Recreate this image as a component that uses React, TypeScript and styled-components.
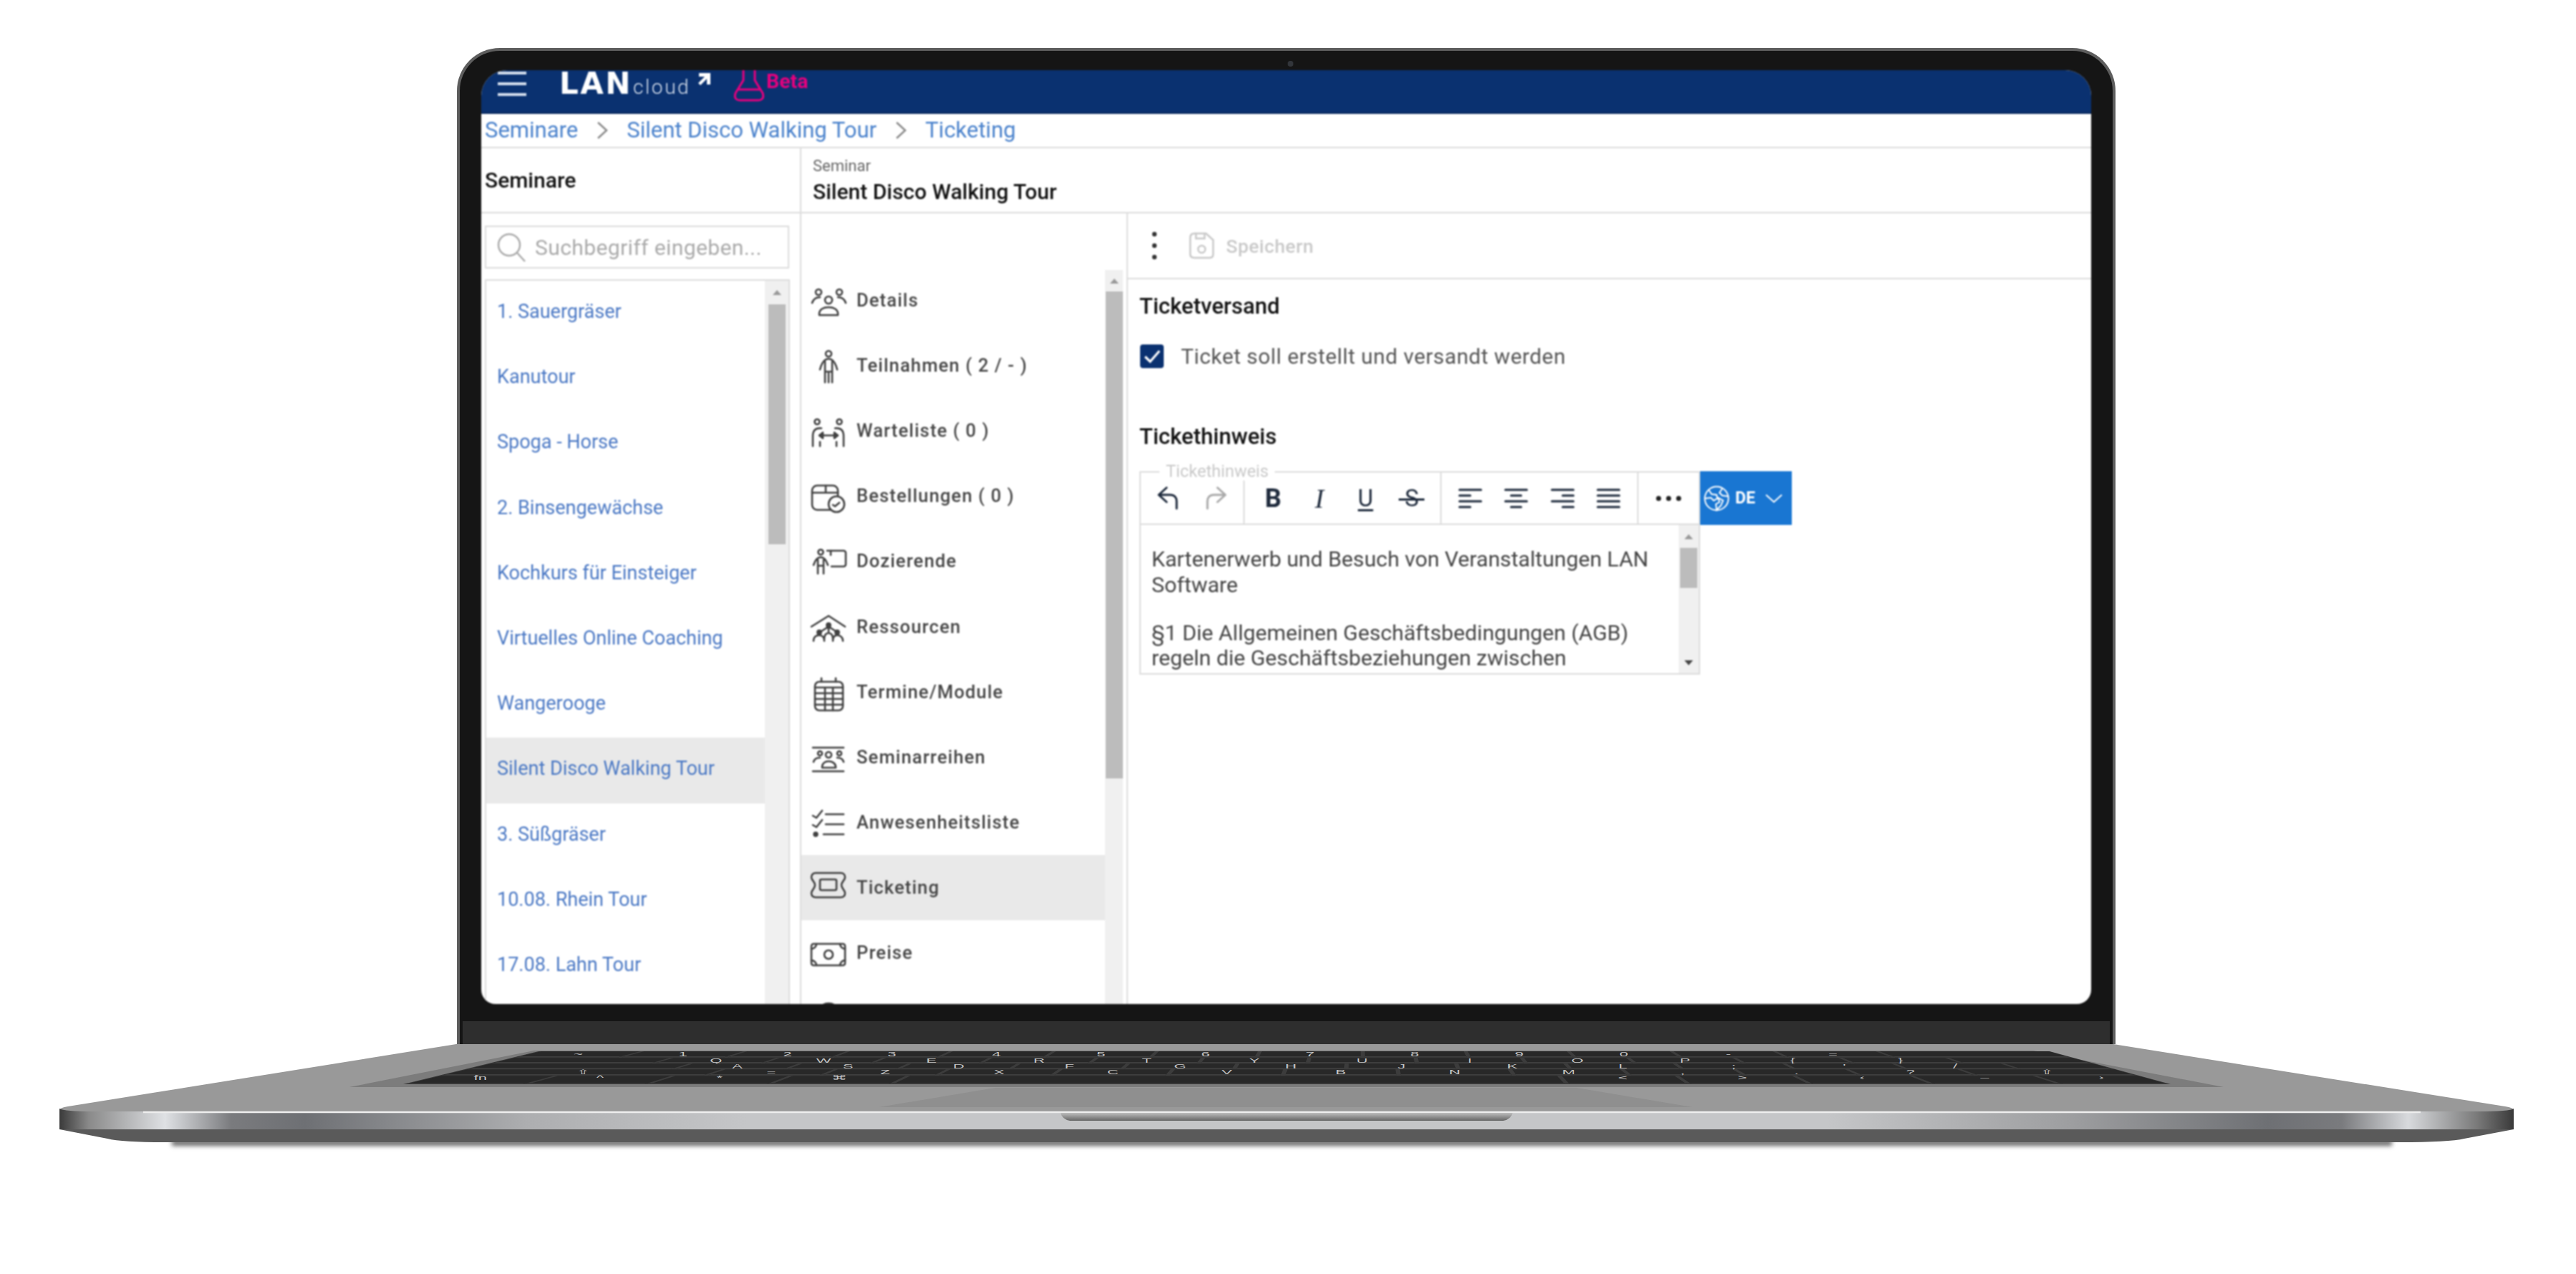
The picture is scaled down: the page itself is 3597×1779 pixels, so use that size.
import React from "react";
import styled, { createGlobalStyle } from "styled-components";

const Global = createGlobalStyle`
  html, body { margin: 0; padding: 0; background: #fff; }
  * { box-sizing: border-box; }
  body { font-family: Roboto, "Liberation Sans", sans-serif; }
`;

const Stage = styled.div`
  width: 3597px;
  height: 1779px;
  padding-top: 67px;
  overflow: hidden;
  background: #fff;
  display: flex;
  flex-direction: column;
`;
const Lid = styled.div`
  position: relative;
  width: 2316px;
  height: 1391px;
  margin-left: 638px;
  padding: 27px 30px 0;
  background: #151515;
  border: 4px solid #5e5e5e;
  border-bottom: none;
  border-radius: 60px 60px 0 0;
`;
const Camera = styled.div`
  position: absolute;
  left: 1156px;
  top: 14px;
  width: 8px;
  height: 8px;
  border-radius: 50%;
  background: #33363b;
`;
const Screen = styled.div`
  width: 2248px;
  height: 1304px;
  background: #fff;
  border-radius: 36px 36px 20px 20px;
  overflow: hidden;
  display: flex;
  flex-direction: column;
  filter: blur(0.8px);
`;
const Chin = styled.div`
  height: 32px;
  margin: 24px -26px 0;
  background: #2e2e2e;
`;
const TopBar = styled.header`
  height: 61px;
  flex: none;
  background: #0a3170;
  border-bottom: 2px solid #08285c;
  display: flex;
  align-items: flex-start;
  padding: 1px 0 0 23px;
`;
const Burger = styled.svg`
  width: 40px;
  height: 36px;
  flex: none;
`;
const Logo = styled.div`
  margin: -2px 0 0 46px;
  width: 218px;
  display: flex;
  align-items: baseline;
  color: #fff;
  height: 40px;
`;
const LogoMain = styled.span`
  font: 700 42px/40px "DejaVu Sans", sans-serif;
  letter-spacing: 2.5px;
`;
const LogoSub = styled.span`
  font: 300 28px/40px Roboto, sans-serif;
  letter-spacing: 2.6px;
  margin-left: 1px;
  color: #d9e2ef;
`;
const LogoArrow = styled.svg`
  width: 20px;
  height: 20px;
  margin-left: 10px;
  align-self: flex-start;
  margin-top: 3px;
  flex: none;
`;
const Flask = styled.svg`
  width: 46px;
  height: 44px;
  margin: -1px 0 0 24px;
  flex: none;
`;
const BetaTag = styled.span`
  font: 700 28.5px/28px Roboto, sans-serif;
  color: #e6007e;
  margin: 1px 0 0 1px;
`;
const Crumbs = styled.nav`
  height: 48px;
  flex: none;
  border-bottom: 2px solid #dcdcdc;
  display: flex;
  align-items: center;
  padding-left: 5px;
  padding-bottom: 1px;
`;
const Crumb = styled.span`
  font-size: 31px;
  color: #4a82cc;
  white-space: nowrap;
`;
const CrumbChevron = styled.svg`
  width: 16px;
  height: 24px;
  margin: 0 26px;
  flex: none;
`;
const Workspace = styled.div`
  flex: 1;
  min-height: 0;
  display: flex;
`;
const LeftColumn = styled.aside`
  width: 447px;
  flex: none;
  border-right: 2px solid #dcdcdc;
  display: flex;
  flex-direction: column;
`;
const PaneTitle = styled.div`
  height: 91px;
  flex: none;
  border-bottom: 2px solid #dcdcdc;
  display: flex;
  align-items: center;
  padding-left: 5px;
  font-size: 30px;
  font-weight: 500;
  color: #111;
`;
const SearchBox = styled.div`
  height: 60px;
  width: 425px;
  flex: none;
  margin: 17px 0 0 5px;
  border: 2px solid #dcdcdc;
  display: flex;
  align-items: center;
  padding-left: 14px;
  gap: 12px;
`;
const SearchText = styled.span`
  font-size: 30px;
  color: #aaa;
  letter-spacing: 0.4px;
  white-space: nowrap;
`;
const SeminarList = styled.div`
  width: 426px;
  flex: 1;
  min-height: 0;
  margin: 15px 0 0 5px;
  border: 2px solid #dcdcdc;
  border-bottom: none;
  display: flex;
`;
const SeminarItems = styled.div`
  flex: 1;
  min-width: 0;
`;
const SeminarRow = styled.div<{ $active?: boolean }>`
  height: 91.2px;
  display: flex;
  align-items: center;
  padding: 0 0 5px 15px;
  font-size: 27px;
  color: #4a78c4;
  white-space: nowrap;
  background: ${(p) => (p.$active ? "#e9e9e9" : "transparent")};
`;
const Track = styled.div<{ $w: number }>`
  width: ${(p) => p.$w}px;
  flex: none;
  background: #f0f0f0;
  display: flex;
  flex-direction: column;
  align-items: center;
`;
const ArrowCap = styled.div<{ $h: number; $down?: boolean }>`
  height: ${(p) => p.$h}px;
  flex: none;
  width: 100%;
  display: flex;
  align-items: center;
  justify-content: center;
  &::before {
    content: "";
    border-left: 6px solid transparent;
    border-right: 6px solid transparent;
    ${(p) => (p.$down ? "border-top: 7px solid #444;" : "border-bottom: 7px solid #999;")}
  }
`;
const Thumb = styled.div<{ $h: number; $w: number }>`
  height: ${(p) => p.$h}px;
  width: ${(p) => p.$w}px;
  flex: none;
  background: #bcbcbc;
`;
const Spacer = styled.div`
  flex: 1;
`;
const MainColumn = styled.main`
  flex: 1;
  min-width: 0;
  display: flex;
  flex-direction: column;
`;
const RecordHead = styled.div`
  height: 91px;
  flex: none;
  border-bottom: 2px solid #dcdcdc;
  padding: 12px 0 0 16px;
  display: flex;
  flex-direction: column;
`;
const RecordKind = styled.span`
  font-size: 22px;
  line-height: 26px;
  color: #666;
`;
const RecordName = styled.span`
  font-size: 30px;
  line-height: 36px;
  font-weight: 500;
  margin-top: 5px;
  color: #111;
`;
const RecordBody = styled.div`
  flex: 1;
  min-height: 0;
  display: flex;
`;
const NavPane = styled.div`
  width: 456px;
  flex: none;
  border-right: 2px solid #dcdcdc;
  display: flex;
  padding-right: 5px;
`;
const NavList = styled.div`
  flex: 1;
  min-width: 0;
  padding-top: 76px;
`;
const NavRow = styled.div<{ $active?: boolean }>`
  height: 91.1px;
  display: flex;
  align-items: center;
  padding: 0 0 1px 6px;
  gap: 1px;
  background: ${(p) => (p.$active ? "#e9e9e9" : "transparent")};
`;
const NavIcon = styled.svg`
  width: 70px;
  height: 60px;
  flex: none;
  fill: none;
  stroke: #3f3f3f;
  stroke-width: 2.6;
  stroke-linecap: round;
  stroke-linejoin: round;
`;
const NavLabel = styled.span`
  font-size: 25.5px;
  font-weight: 500;
  letter-spacing: 1.15px;
  color: #444;
  white-space: nowrap;
`;
const NavScroll = styled.div`
  margin-top: 79px;
  display: flex;
`;
const ContentPane = styled.section`
  flex: 1;
  min-width: 0;
  display: flex;
  flex-direction: column;
`;
const ActionBar = styled.div`
  height: 92px;
  flex: none;
  border-bottom: 2px solid #dcdcdc;
  display: flex;
  align-items: center;
  padding-left: 31px;
`;
const KebabIcon = styled.svg`
  width: 12px;
  height: 44px;
  flex: none;
`;
const SaveIcon = styled.svg`
  width: 36px;
  height: 38px;
  margin-left: 42px;
  flex: none;
  fill: none;
  stroke: #c8c8c8;
  stroke-width: 2.5;
`;
const SaveLabel = styled.span`
  font-size: 26.5px;
  font-weight: 500;
  color: #c9c9c9;
  margin-left: 16px;
  letter-spacing: 0.4px;
`;
const FormBody = styled.div`
  padding: 23px 0 0 16px;
  display: flex;
  flex-direction: column;
  align-items: flex-start;
`;
const SectionHeading = styled.h2<{ $gap?: number }>`
  margin: ${(p) => p.$gap ?? 0}px 0 0;
  font-size: 31px;
  line-height: 30px;
  font-weight: 500;
  color: #111;
`;
const CheckRow = styled.div`
  display: flex;
  align-items: center;
  gap: 24px;
  margin: 38px 0 0 1px;
`;
const CheckBox = styled.div`
  width: 33px;
  height: 33px;
  border-radius: 4px;
  background: #0a3170;
  display: flex;
  align-items: center;
  justify-content: center;
`;
const CheckLabel = styled.span`
  font-size: 29.8px;
  line-height: 33px;
  color: #555;
  letter-spacing: 0.5px;
`;
const Editor = styled.div`
  position: relative;
  width: 911px;
  margin-top: 33px;
`;
const EditorLegend = styled.span`
  position: absolute;
  left: 28px;
  top: -13px;
  background: #fff;
  padding: 0 9px;
  font-size: 23.5px;
  line-height: 26px;
  color: #c9c9c9;
`;
const EditorToolbar = styled.div`
  display: flex;
  height: 75px;
`;
const ToolFrame = styled.div`
  width: 783px;
  border: 2px solid #dcdcdc;
  display: flex;
`;
const ToolGroup = styled.div<{ $w: number; $last?: boolean }>`
  width: ${(p) => p.$w}px;
  flex: none;
  display: flex;
  justify-content: center;
  align-items: center;
  border-right: ${(p) => (p.$last ? "none" : "2px solid #dcdcdc")};
`;
const ToolButton = styled.div<{ $muted?: boolean }>`
  width: 64.5px;
  height: 100%;
  display: flex;
  align-items: center;
  justify-content: center;
  flex: none;
  color: ${(p) => (p.$muted ? "#aaa" : "#1e2a3c")};
`;
const ToolLetter = styled.span<{ $kind: "b" | "i" | "u" | "s" }>`
  position: relative;
  color: #1e2a3c;
  line-height: 1;
  font-family: ${(p) => (p.$kind === "i" ? '"Liberation Serif", serif' : "Roboto, sans-serif")};
  font-style: ${(p) => (p.$kind === "i" ? "italic" : "normal")};
  font-weight: ${(p) => (p.$kind === "b" ? 700 : 400)};
  font-size: ${(p) => (p.$kind === "b" ? 36 : p.$kind === "i" ? 38 : 33)}px;
  text-decoration: ${(p) => (p.$kind === "u" ? "underline" : "none")};
  text-decoration-thickness: 3px;
  text-underline-offset: 4px;
  ${(p) =>
    p.$kind === "s"
      ? `&::after {
          content: "";
          position: absolute;
          left: -8px;
          right: -8px;
          top: 17px;
          height: 3px;
          background: #1e2a3c;
        }`
      : ""}
`;
const ToolIcon = styled.svg`
  width: 40px;
  height: 40px;
  fill: none;
  stroke: currentColor;
  stroke-width: 3;
  stroke-linecap: round;
  stroke-linejoin: round;
`;
const LangButton = styled.div`
  width: 128px;
  background: #1976d2;
  color: #fff;
  display: flex;
  align-items: center;
  padding-left: 4px;
  gap: 7px;
`;
const LangCode = styled.span`
  font-size: 23px;
  font-weight: 700;
`;
const LangIcon = styled.svg`
  width: 38px;
  height: 38px;
  fill: none;
  stroke: #fff;
  stroke-width: 2;
  flex: none;
`;
const LangChevron = styled.svg`
  width: 26px;
  height: 14px;
  margin-left: 6px;
  fill: none;
  stroke: #fff;
  stroke-width: 2;
  flex: none;
`;
const EditorBody = styled.div`
  width: 783px;
  height: 209px;
  border: 2px solid #dcdcdc;
  border-top: none;
  display: flex;
  overflow: hidden;
`;
const EditorText = styled.div`
  width: 751px;
  flex: none;
  padding: 30px 0 0 15px;
  font-size: 30.2px;
  line-height: 35.5px;
  color: #444;
  overflow: hidden;
`;
const EditorPara = styled.p`
  margin: 0 0 31.5px;
`;
const LaptopBase = styled.svg`
  display: block;
  width: 3597px;
  height: 160px;
  flex: none;
`;
const DropShadow = styled.rect`
  filter: blur(3px);
`;
const KeyLegend = styled.text`
  font-family: "Liberation Sans", sans-serif;
  font-size: 10px;
  fill: #c4c4c4;
  text-anchor: middle;
`;

const crumbs = ["Seminare", "Silent Disco Walking Tour", "Ticketing"];
const seminars = [
  "1. Sauergräser",
  "Kanutour",
  "Spoga - Horse",
  "2. Binsengewächse",
  "Kochkurs für Einsteiger",
  "Virtuelles Online Coaching",
  "Wangerooge",
  "Silent Disco Walking Tour",
  "3. Süßgräser",
  "10.08. Rhein Tour",
  "17.08. Lahn Tour",
];

const navItems: { label: string; icon: React.ReactNode }[] = [
  {
    label: "Details",
    icon: (
      <>
        <circle cx="18" cy="19" r="4" />
        <circle cx="47" cy="19" r="4" />
        <circle cx="32" cy="30" r="5" />
        <path d="M9 34c2-6 6-8 11-8M56 34c-2-6-6-8-11-8" />
        <path d="M19 51v-2c0-6 6-9 13-9s13 3 13 9v2z" />
      </>
    ),
  },
  {
    label: "Teilnahmen ( 2 / - )",
    icon: (
      <>
        <circle cx="32" cy="14" r="4" />
        <path d="M32 21c-6 0-10 7-12 15M32 21c6 0 10 7 12 15" />
        <path d="M27 25v29M37 25v29M27 39h10M32 41v13" />
      </>
    ),
  },
  {
    label: "Warteliste ( 0 )",
    icon: (
      <>
        <circle cx="16" cy="18" r="3.5" />
        <circle cx="47" cy="18" r="3.5" />
        <path d="M22 27c-9-1-12 4-12 11v14M20 46v6M41 27c9-1 12 4 12 11v14M43 46v6" />
        <path d="M21 37h22" />
        <path d="M19 37l5-4v8zM45 37l-5-4v8z" fill="#444" />
      </>
    ),
  },
  {
    label: "Bestellungen ( 0 )",
    icon: (
      <>
        <path d="M35 50H16a7 7 0 0 1-7-7V23a7 7 0 0 1 7-7h22a7 7 0 0 1 7 7v7" />
        <path d="M9 26h36M28 16v10" />
        <circle cx="43" cy="42" r="11" fill="#fff" />
        <path d="M38 43l3 2 6-5" />
      </>
    ),
  },
  {
    label: "Dozierende",
    icon: (
      <>
        <circle cx="21" cy="18" r="3.5" />
        <path d="M21 25c-5 0-8 5-10 11M21 25c5 0 8 5 10 11M17 28v20M25 28v20M17 37h8" />
        <path d="M30 16h23a3 3 0 0 1 3 3v16a3 3 0 0 1-3 3H36" />
        <path d="M35 16v6" />
      </>
    ),
  },
  {
    label: "Ressourcen",
    icon: (
      <>
        <path d="M8 30l24-15 23 15" />
        <circle cx="32" cy="28" r="2.6" fill="#444" />
        <circle cx="19" cy="38" r="2.6" fill="#444" />
        <circle cx="44" cy="38" r="2.6" fill="#444" />
        <path d="M32 30l-11 7M32 30l11 7M32 30v8M26 48c0-7 3-9 6-9s6 2 6 9M11 50c0-6 4-8 8-8s7 3 7 8M38 50c0-6 3-8 6-8s8 2 8 8" />
      </>
    ),
  },
  {
    label: "Termine/Module",
    icon: (
      <>
        <rect x="13" y="16" width="39" height="40" rx="6" />
        <path d="M22 11v5M42 11v5M13 24h39M13 32h39M13 40h39M13 48h39M27 24v32M38 24v32" />
      </>
    ),
  },
  {
    label: "Seminarreihen",
    icon: (
      <>
        <path d="M10 17h43M10 50h43" />
        <circle cx="20" cy="25" r="3" />
        <circle cx="47" cy="25" r="3" />
        <circle cx="32" cy="27" r="4" />
        <path d="M11 37c1-4 4-6 9-6M53 37c-1-4-4-6-9-6" />
        <path d="M23 45v-1c0-5 4-8 9-8s10 3 10 8v1z" />
      </>
    ),
  },
  {
    label: "Anwesenheitsliste",
    icon: (
      <>
        <path d="M10 21l5 3 8-10M10 34l5 3 8-10M28 19h25M28 33h25M25 47h28" />
        <circle cx="14" cy="47" r="2.4" fill="#444" />
      </>
    ),
  },
  {
    label: "Ticketing",
    icon: (
      <>
        <path d="M14 10h35c4 0 6 3 6 6 0 4-5 6-5 11s5 7 5 11c0 4-2 6-6 6H14c-4 0-6-2-6-6 0-4 5-6 5-11s-5-7-5-11c0-3 2-6 6-6z" />
        <rect x="20" y="19" width="23" height="15" rx="2" />
      </>
    ),
  },
  {
    label: "Preise",
    icon: (
      <>
        <rect x="8" y="18" width="47" height="30" rx="3" />
        <circle cx="32" cy="33" r="6" />
        <path d="M8 25a7 7 0 0 0 7-7M48 18a7 7 0 0 0 7 7M8 41a7 7 0 0 1 7 7M48 48a7 7 0 0 1 7-7" />
      </>
    ),
  },
];

const AlignLines = ({ rows }: { rows: [number, number][] }) => (
  <ToolIcon viewBox="0 0 40 40">
    {rows.map(([a, b], i) => (
      <line key={i} x1={a} x2={b} y1={8 + i * 8} y2={8 + i * 8} />
    ))}
  </ToolIcon>
);

/* Keyboard geometry: keys are laid on the keyboard deck in perspective. */
type Key = [string, number];
const letters = (s: string): Key[] => s.split(" ").map((c) => [c, 1]);
const keyRows: { top: number; bottom: number; keys: Key[] }[] = [
  { top: 10, bottom: 18.5, keys: [...letters("~ 1 2 3 4 5 6 7 8 9 0 - ="), ["", 1.68]] },
  { top: 19.2, bottom: 26.5, keys: [["", 1.5], ...letters("Q W E R T Y U I O P { }"), ["", 1.2]] },
  { top: 27.2, bottom: 34.5, keys: [["", 1.85], ...letters("A S D F G H J K L ; ' /"), ["", 0.85]] },
  { top: 35.2, bottom: 43.5, keys: [["⇧", 2.3], ...letters("= Z X C V B N M , . ?"), ["⇧", 1.4]] },
  {
    top: 44.2,
    bottom: 56,
    keys: [["fn", 1], ["^", 1], ["*", 1], ["⌘", 1], ["", 5.55], ["<", 1], [">", 1], ["‹", 1], ["–", 1.05], ["›", 0.9]],
  },
];
const xAt = (u: number, y: number) => {
  const t = (y - 10) / 46;
  const left = 752 + (563 - 752) * t;
  const right = 2862 + (3031 - 2862) * t;
  return left + (right - left) * u;
};

const Keyboard = () => (
  <g>
    <polygon points="746,9 2839,9 3105,60 488,60" fill="#7c7c7c" />
    <polygon points="752,10 2862,10 3031,56 563,56" fill="#3c3c3c" />
    {keyRows.map((row, r) => {
      const total = row.keys.reduce((s, k) => s + k[1], 0);
      let acc = 0;
      return row.keys.map(([label, w], k) => {
        const a = (acc + 0.02) / total;
        const b = (acc + w - 0.02) / total;
        acc += w;
        const y0 = row.top;
        const y1 = row.bottom;
        const ym = y1 - 1.5;
        const pts = `${xAt(a, y0) + 1},${y0} ${xAt(b, y0) + 1},${y0} ${xAt(b, y1)},${y1} ${xAt(a, y1)},${y1}`;
        const lip = `${xAt(a, ym)},${ym} ${xAt(b, ym)},${ym} ${xAt(b, y1)},${y1} ${xAt(a, y1)},${y1}`;
        const ctr = (xAt(a, (y0 + y1) / 2) + xAt(b, (y0 + y1) / 2)) / 2;
        const cy = (y0 + y1) / 2 + (r === 4 ? 0 : 3);
        return (
          <g key={`${r}-${k}`}>
            <polygon points={pts} fill="#282828" />
            <polygon points={lip} fill="#3e3e3e" />
            {label && (
              <KeyLegend transform={`translate(${ctr} ${cy}) scale(2.2 0.9)`}>{label}</KeyLegend>
            )}
          </g>
        );
      });
    })}
  </g>
);

const Base = () => (
  <LaptopBase viewBox="0 0 3597 160">
    <defs>
      <linearGradient id="front" x1="83" x2="3510" y1="0" y2="0" gradientUnits="userSpaceOnUse">
        <stop offset="0" stopColor="#3a3a3a" />
        <stop offset="0.012" stopColor="#8a8a8a" />
        <stop offset="0.043" stopColor="#dfe1e4" />
        <stop offset="0.07" stopColor="#7a7b7e" />
        <stop offset="0.1" stopColor="#6e7074" />
        <stop offset="0.19" stopColor="#adaeb0" />
        <stop offset="0.28" stopColor="#c5c6c8" />
        <stop offset="0.72" stopColor="#c5c6c8" />
        <stop offset="0.82" stopColor="#9d9ea0" />
        <stop offset="0.9" stopColor="#6e7074" />
        <stop offset="0.93" stopColor="#7a7b7e" />
        <stop offset="0.957" stopColor="#d8dadd" />
        <stop offset="0.985" stopColor="#7a7a7a" />
        <stop offset="1" stopColor="#3a3a3a" />
      </linearGradient>
      <linearGradient id="notch" x1="0" x2="0" y1="0" y2="1">
        <stop offset="0" stopColor="#bdbdbd" />
        <stop offset="1" stopColor="#666" />
      </linearGradient>
    </defs>
    <DropShadow x="240" y="134" width="3100" height="8" fill="#666" />
    <path d="M637 0H2951L3498 87Q3510 89 3510 92V96H83V92Q83 89 95 87Z" fill="#999" />
    <Keyboard />
    <polygon points="1389,61 2202,61 2363,88 1228,88" fill="#8f8f8f" />
    <path d="M83 90Q90 94 130 94H3460Q3505 94 3510 90V119H83Z" fill="url(#front)" />
    <path d="M200 95H3380" stroke="#eee" strokeWidth="2.5" />
    <path d="M1481 96H2112Q2110 105 2099 107H1494Q1483 105 1481 96Z" fill="url(#notch)" />
    <path d="M83 119L150 132Q170 137 230 137H3350Q3420 137 3441 132L3510 119Z" fill="#5a5a5a" />
  </LaptopBase>
);

const Scroll = ({ w, cap, thumb, thumbW, bottomCap }: { w: number; cap: number; thumb: number; thumbW: number; bottomCap?: number }) => (
  <Track $w={w}>
    <ArrowCap $h={cap} />
    <Thumb $h={thumb} $w={thumbW} />
    <Spacer />
    {bottomCap ? <ArrowCap $h={bottomCap} $down /> : null}
  </Track>
);

export default function App() {
  return (
    <Stage>
      <Global />
      <Lid>
        <Camera />
        <Screen>
          <TopBar>
            <Burger viewBox="0 0 40 36">
              <path d="M0 3H40M0 18H40M0 33H40" stroke="#d5dfee" strokeWidth="4" />
            </Burger>
            <Logo>
              <LogoMain>LAN</LogoMain>
              <LogoSub>cloud</LogoSub>
              <LogoArrow viewBox="0 0 20 20">
                <path d="M2 2H18V18H13V10L4 19L1 16L10 7H2Z" fill="#fff" />
              </LogoArrow>
            </Logo>
            <Flask viewBox="0 0 46 44" fill="none" stroke="#e6007e" strokeWidth="3">
              <path d="M15 0V14L4 32Q1 42 11 42H35Q45 42 42 32L31 14V0" />
              <path d="M8 27H38" />
            </Flask>
            <BetaTag>Beta</BetaTag>
          </TopBar>
          <Crumbs>
            {crumbs.map((c, i) => (
              <React.Fragment key={c}>
                {i > 0 && (
                  <CrumbChevron viewBox="0 0 16 24">
                    <path d="M2 1L14 12L2 23" fill="none" stroke="#8a8a8a" strokeWidth="2.5" />
                  </CrumbChevron>
                )}
                <Crumb>{c}</Crumb>
              </React.Fragment>
            ))}
          </Crumbs>
          <Workspace>
            <LeftColumn>
              <PaneTitle>Seminare</PaneTitle>
              <SearchBox>
                <svg width="42" height="42" viewBox="0 0 42 42" fill="none" stroke="#aaa" strokeWidth="2.5">
                  <circle cx="18" cy="18" r="15" />
                  <path d="M29 29L40 41" />
                </svg>
                <SearchText>Suchbegriff eingeben...</SearchText>
              </SearchBox>
              <SeminarList>
                <SeminarItems>
                  {seminars.map((s) => (
                    <SeminarRow key={s} $active={s === "Silent Disco Walking Tour"}>
                      {s}
                    </SeminarRow>
                  ))}
                </SeminarItems>
                <Scroll w={33} cap={33} thumb={335} thumbW={24} />
              </SeminarList>
            </LeftColumn>
            <MainColumn>
              <RecordHead>
                <RecordKind>Seminar</RecordKind>
                <RecordName>Silent Disco Walking Tour</RecordName>
              </RecordHead>
              <RecordBody>
                <NavPane>
                  <NavList>
                    {navItems.map((n) => (
                      <NavRow key={n.label} $active={n.label === "Ticketing"}>
                        <NavIcon viewBox="0 0 70 60">{n.icon}</NavIcon>
                        <NavLabel>{n.label}</NavLabel>
                      </NavRow>
                    ))}
                    <NavRow>
                      <NavIcon viewBox="0 0 70 60">
                        <circle cx="32" cy="25" r="15" />
                      </NavIcon>
                    </NavRow>
                  </NavList>
                  <NavScroll>
                    <Scroll w={25} cap={30} thumb={680} thumbW={24} />
                  </NavScroll>
                </NavPane>
                <ContentPane>
                  <ActionBar>
                    <KebabIcon viewBox="0 0 12 44">
                      <circle cx="6" cy="6" r="3.2" fill="#333" />
                      <circle cx="6" cy="22" r="3.2" fill="#333" />
                      <circle cx="6" cy="38" r="3.2" fill="#333" />
                    </KebabIcon>
                    <SaveIcon viewBox="0 0 36 38">
                      <path d="M8 2H24L34 11V31Q34 36 29 36H8Q2 36 2 31V8Q2 2 8 2Z" />
                      <circle cx="18" cy="24" r="5" />
                      <path d="M10 2V9H22V2" />
                    </SaveIcon>
                    <SaveLabel>Speichern</SaveLabel>
                  </ActionBar>
                  <FormBody>
                    <SectionHeading>Ticketversand</SectionHeading>
                    <CheckRow>
                      <CheckBox>
                        <svg width="24" height="20" viewBox="0 0 24 20" fill="none" stroke="#fff" strokeWidth="3.2">
                          <path d="M2 10L9 17L22 2" />
                        </svg>
                      </CheckBox>
                      <CheckLabel>Ticket soll erstellt und versandt werden</CheckLabel>
                    </CheckRow>
                    <SectionHeading $gap={81}>Tickethinweis</SectionHeading>
                    <Editor>
                      <EditorLegend>Tickethinweis</EditorLegend>
                      <EditorToolbar>
                        <ToolFrame>
                          <ToolGroup $w={145}>
                            <ToolButton>
                              <ToolIcon viewBox="0 0 40 40">
                                <path d="M17 5L6 15L17 25M6 15H22C28 15 31 19 31 24V34" />
                              </ToolIcon>
                            </ToolButton>
                            <ToolButton $muted>
                              <ToolIcon viewBox="0 0 40 40">
                                <path d="M23 5L34 15L23 25M34 15H18C12 15 9 19 9 24V34" />
                              </ToolIcon>
                            </ToolButton>
                          </ToolGroup>
                          <ToolGroup $w={275}>
                            <ToolButton>
                              <ToolLetter $kind="b">B</ToolLetter>
                            </ToolButton>
                            <ToolButton>
                              <ToolLetter $kind="i">I</ToolLetter>
                            </ToolButton>
                            <ToolButton>
                              <ToolLetter $kind="u">U</ToolLetter>
                            </ToolButton>
                            <ToolButton>
                              <ToolLetter $kind="s">S</ToolLetter>
                            </ToolButton>
                          </ToolGroup>
                          <ToolGroup $w={275}>
                            <ToolButton>
                              <AlignLines rows={[[5, 35], [5, 20], [5, 35], [5, 20]]} />
                            </ToolButton>
                            <ToolButton>
                              <AlignLines rows={[[5, 35], [13, 27], [5, 35], [13, 27]]} />
                            </ToolButton>
                            <ToolButton>
                              <AlignLines rows={[[5, 35], [20, 35], [5, 35], [20, 35]]} />
                            </ToolButton>
                            <ToolButton>
                              <AlignLines rows={[[5, 35], [5, 35], [5, 35], [5, 35]]} />
                            </ToolButton>
                          </ToolGroup>
                          <ToolGroup $w={84} $last>
                            <svg width="36" height="10" viewBox="0 0 36 10" fill="#222">
                              <circle cx="4" cy="5" r="3.5" />
                              <circle cx="18" cy="5" r="3.5" />
                              <circle cx="32" cy="5" r="3.5" />
                            </svg>
                          </ToolGroup>
                        </ToolFrame>
                        <LangButton>
                          <LangIcon viewBox="0 0 38 38">
                            <circle cx="19" cy="19" r="16.5" />
                            <path d="M8 7l4 6 7 1 1 5-5 3-4-4-8 1M27 5l-4 6 4 4 8 1M19 35l-1-8 5-3-2-6 7 4-3 7z" />
                          </LangIcon>
                          <LangCode>DE</LangCode>
                          <LangChevron viewBox="0 0 26 14">
                            <path d="M2 2L13 12L24 2" />
                          </LangChevron>
                        </LangButton>
                      </EditorToolbar>
                      <EditorBody>
                        <EditorText>
                          <EditorPara>Kartenerwerb und Besuch von Veranstaltungen LAN Software</EditorPara>
                          <EditorPara>§1 Die Allgemeinen Geschäftsbedingungen (AGB) regeln die Geschäftsbeziehungen zwischen</EditorPara>
                        </EditorText>
                        <Scroll w={28} cap={32} thumb={56} thumbW={24} bottomCap={30} />
                      </EditorBody>
                    </Editor>
                  </FormBody>
                </ContentPane>
              </RecordBody>
            </MainColumn>
          </Workspace>
        </Screen>
        <Chin />
      </Lid>
      <Base />
    </Stage>
  );
}
